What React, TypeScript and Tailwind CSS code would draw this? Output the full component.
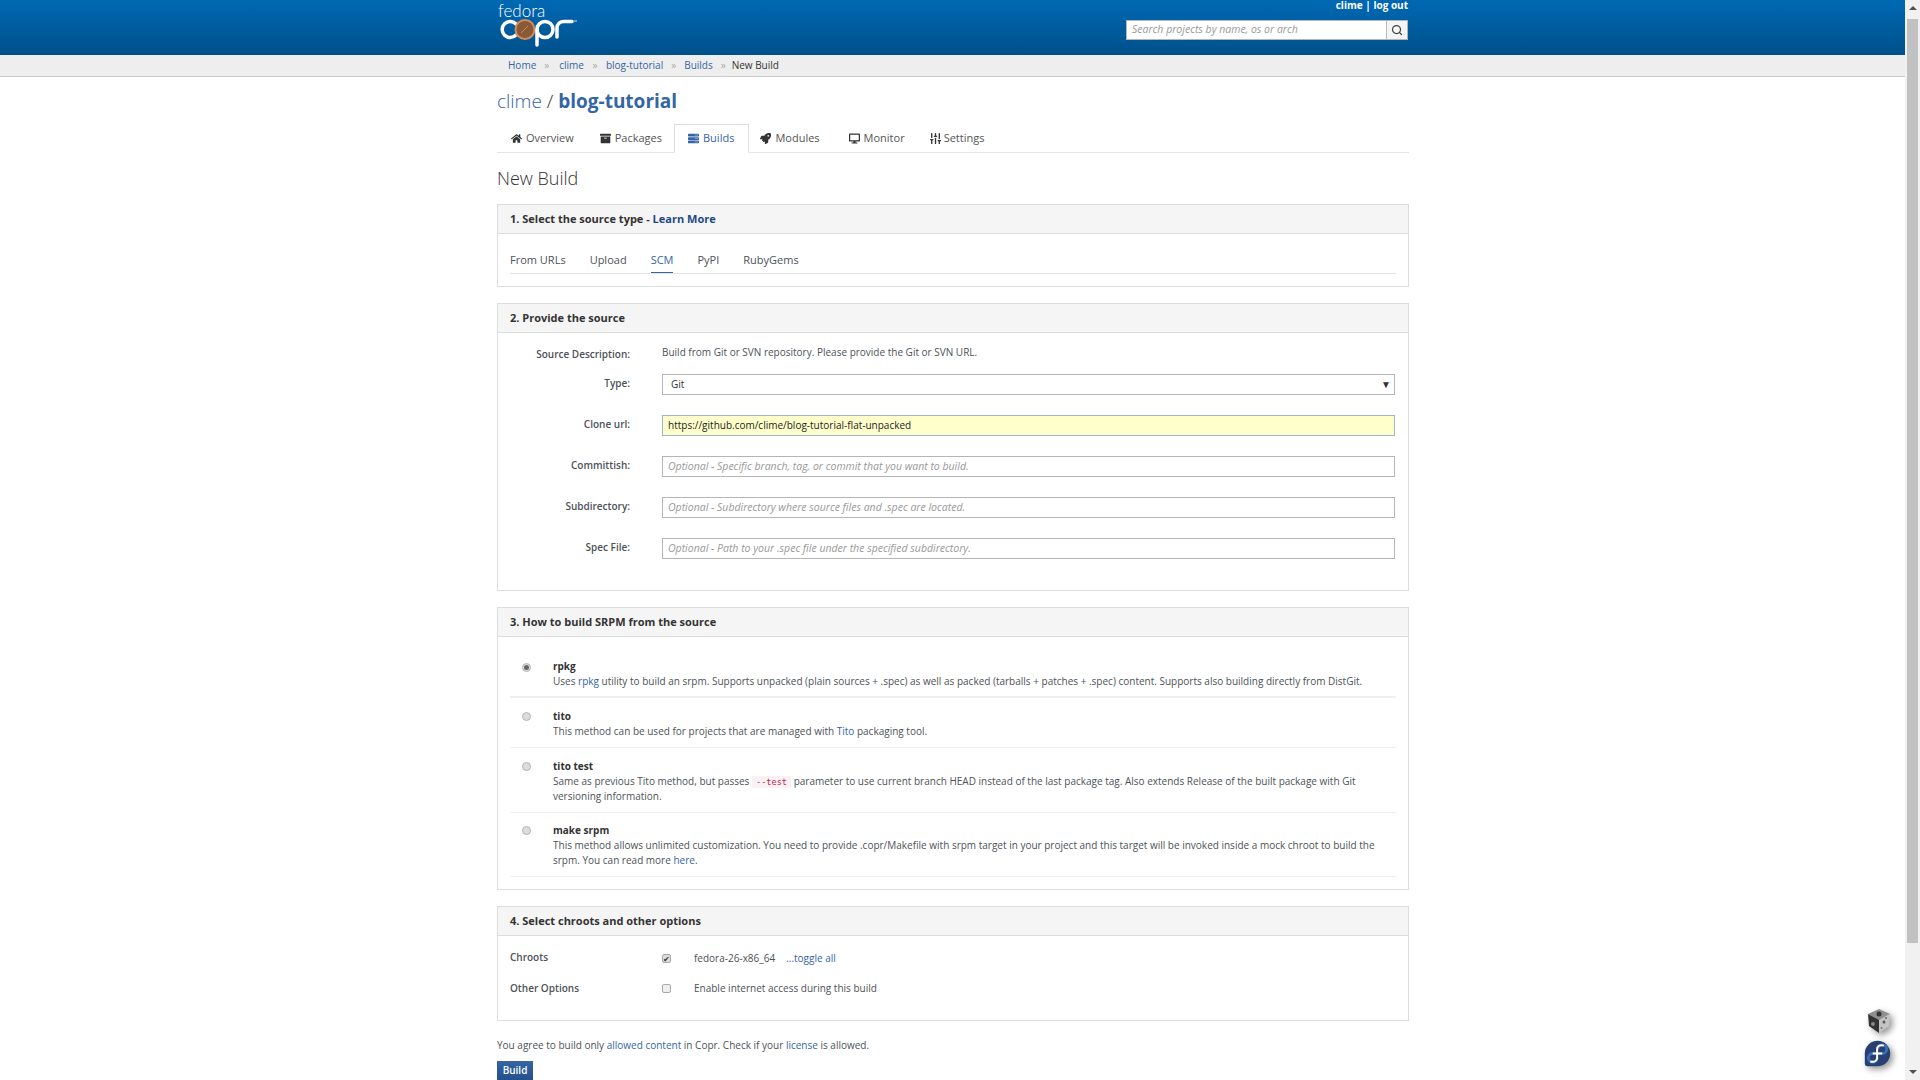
import { FaHome, FaArchive, FaServer, FaRocket, FaDesktop } from "react-icons/fa";
import { Search, SlidersVertical } from "lucide-react";
import type { ReactNode } from "react";

const tabs = [
  { icon: FaHome, label: "Overview", pad: "pl-[12px] pr-[11px]" },
  { icon: FaArchive, label: "Packages", pad: "pl-[12px] pr-[11px]" },
  { icon: FaServer, label: "Builds", pad: "pl-[12px] pr-[14px]", active: true },
  { icon: FaRocket, label: "Modules", pad: "pl-[9px] pr-[14px]" },
  { icon: FaDesktop, label: "Monitor", pad: "pl-[12px] pr-[11px]" },
];

const crumbs = [
  { label: "Home", sep: "ml-[8px] mr-[10px]" },
  { label: "clime", sep: "mx-[8.500px]" },
  { label: "blog-tutorial", sep: "mx-[8px]" },
  { label: "Builds", sep: "ml-[8px] mr-[6px]" },
];
const sourceTabs = ["From URLs", "Upload", "SCM", "PyPI", "RubyGems"];

const fields = [
  { label: "Committish:", placeholder: "Optional - Specific branch, tag, or commit that you want to build." },
  { label: "Subdirectory:", placeholder: "Optional - Subdirectory where source files and .spec are located." },
  { label: "Spec File:", placeholder: "Optional - Path to your .spec file under the specified subdirectory." },
];

function A({ children }: { children: ReactNode }) {
  return <a className="text-[#3465a4]">{children}</a>;
}

function Panel({ title, className, children }: { title: ReactNode; className: string; children: ReactNode }) {
  return (
    <section className={`border border-[#ddd] flex flex-col ${className}`}>
      <h3 className="h-[29px] shrink-0 bg-[#f5f5f5] border-b border-[#ddd] px-3 flex items-center text-[11px] font-bold text-[#333]">
        <span>{title}</span>
      </h3>
      {children}
    </section>
  );
}

function Radio({ checked }: { checked?: boolean }) {
  return (
    <span className="w-[9px] h-[9px] rounded-full border border-[#b5b5b5] bg-[#dcdcdc] flex items-center justify-center shrink-0">
      {checked && <span className="w-[5px] h-[5px] rounded-full bg-[#666]" />}
    </span>
  );
}

function Method({ name, checked, className, children }: { name: string; checked?: boolean; className: string; children: ReactNode }) {
  return (
    <div className={`flex ${className}`}>
      <div className={`w-[43px] pl-[12px] shrink-0 ${checked ? "pt-[4px]" : "pt-[3px]"}`}>
        <Radio checked={checked} />
      </div>
      <div className="leading-[15px]">
        <div className="font-bold text-[#333]">{name}</div>
        <div className="text-[#4d5258]">{children}</div>
      </div>
    </div>
  );
}

function CoprLogo() {
  return (
    <svg width="90" height="54" viewBox="0 0 90 54" fill="none">
      <text x="8" y="17" fill="#fff" fontSize="17" fontWeight="300" fontFamily="Lato, sans-serif">fedora</text>
      <path d="M26 24a8 8 0 1 0 0 11" stroke="#fff" strokeWidth="3.500" strokeLinecap="round" />
      <circle cx="35" cy="29.500" r="9.500" fill="#8a5a35" stroke="#d08c5e" strokeWidth="2" />
      <path d="M31 33l7-7" stroke="#b98a66" strokeWidth="1" />
      <circle cx="55" cy="29.500" r="8" stroke="#fff" strokeWidth="3.500" />
      <path d="M47 30v15" stroke="#fff" strokeWidth="3.500" strokeLinecap="round" />
      <path d="M67 37V28c0-4 3-6.500 7-6.500h8" stroke="#fff" strokeWidth="3.500" strokeLinecap="round" />
      <path d="M84 21h3" stroke="#cfe0ee" strokeWidth="1" />
    </svg>
  );
}

function FedoraLogo() {
  return (
    <svg width="27" height="27" viewBox="0 0 34 34">
      <path d="M17 1a16 16 0 0 1 0 32H4a3 3 0 0 1-3-3V17A16 16 0 0 1 17 1z" fill="#294172" />
      <path d="M17 17h-6a5.500 5.500 0 1 0 5.500 5.500" stroke="#3c6eb4" strokeWidth="3.500" fill="none" />
      <path d="M17 17h6a5.500 5.500 0 1 0-5.500-5.500" stroke="#3c6eb4" strokeWidth="3.500" fill="none" />
      <path d="M16.500 24v-12.500c0-3 2.500-5 5.500-5a8 8 0 0 1 3 .6M11 17h12M16.500 22c0 3-2.500 5.500-5.500 5.500a8 8 0 0 1-3-.6" stroke="#fff" strokeWidth="2.500" fill="none" />
    </svg>
  );
}

function CubeLogo() {
  return (
    <svg width="26" height="26" viewBox="0 0 26 26">
      <path d="M13 1l11 5-11 6L2 6z" fill="#8f8f8f" />
      <path d="M2 6l11 6 0 13L3 18z" fill="#333" />
      <path d="M24 6l-11 6 0 13 10-7z" fill="#c4c4c4" />
      <circle cx="18" cy="14" r="1.500" fill="#555" />
      <circle cx="20" cy="10" r="1" fill="#666" />
      <circle cx="15.500" cy="20" r="1" fill="#777" />
      <circle cx="7" cy="16" r="2" fill="#888" />
      <circle cx="13" cy="6" r="2.500" fill="#333" />
    </svg>
  );
}

export default function App() {
  return (
    <div className="h-screen overflow-hidden flex bg-white text-[10px] text-[#4d5258] font-['Open_Sans','Noto_Sans',sans-serif] relative">
      <main className="w-[1905px] shrink-0 flex flex-col">
        <header className="h-[55px] shrink-0 bg-gradient-to-b from-[#0069b4] to-[#00508a]">
          <div className="w-[919px] ml-[490px] h-full flex justify-between">
            <CoprLogo />
            <div className="w-[284px] flex flex-col items-end">
              <div className="h-[11px] leading-[11px] font-bold text-white pr-[1px]">clime | log out</div>
              <div className="mt-[9px] mr-[1px] flex w-[282px] h-[20px] border border-[#b5b5b5] bg-white">
                <div className="flex-1 pl-[5px] flex items-center italic text-[10.500px] text-[#999]">Search projects by name, os or arch</div>
                <div className="w-[21px] bg-[#f5f5f5] border-l border-[#bbb] flex items-center justify-center text-[#444]">
                  <Search size={12} strokeWidth={2.500} />
                </div>
              </div>
            </div>
          </div>
        </header>

        <nav className="h-[22px] shrink-0 bg-[#eee] border-b border-[#ccc]">
          <div className="ml-[508px] h-full flex items-center">
            {crumbs.map((c) => (
              <span key={c.label} className="flex items-center">
                <A>{c.label}</A>
                <span className={`${c.sep} text-[#aaa]`}>»</span>
              </span>
            ))}
            <span className="text-[#333]">New Build</span>
          </div>
        </nav>

        <div className="w-[912px] ml-[497px]">
          <h1 className="h-[47px] pt-[9px] text-[19px] leading-[30px] text-[#3465a4]">
            <span className="font-light">clime</span> <span className="text-[#333] font-light">/</span> <strong className="font-bold">blog-tutorial</strong>
          </h1>

          <div className="h-[29px] flex border-b border-[#e5e5e5] text-[11px]">
            {tabs.map((t) => (
              <div
                key={t.label}
                className={`h-[29px] ${t.pad} flex items-center gap-[3px] border ${t.active ? "border-[#ddd] border-b-white text-[#3465a4]" : "border-transparent text-[#555]"}`}
              >
                <span className="w-[13px] flex justify-center">
                  <t.icon className={`text-[11px] ${t.active ? "text-[#3465a4]" : "text-[#333]"}`} />
                </span>
                <span>{t.label}</span>
              </div>
            ))}
            <div className="h-[29px] px-[12px] flex items-center gap-[2px] text-[#555]">
              <SlidersVertical size={13} className="text-[#333]" strokeWidth={2.500} />
              <span>Settings</span>
            </div>
          </div>

          <h2 className="h-[51px] pt-[13px] text-[18px] leading-[25px] font-light text-[#333]">New Build</h2>

          <Panel className="h-[83px]" title={<>1. Select the source type - <a className="text-[#204a87]">Learn More</a></>}>
            <div className="mx-3 mt-[16px] h-[24px] flex gap-[24px] border-b border-[#e5e5e5] text-[11px] text-[#4d5258]">
              {sourceTabs.map((s) => (
                <span key={s} className={`h-[23px] pt-[2px] ${s === "SCM" ? "text-[#3465a4] border-b border-[#3465a4]" : ""}`}>{s}</span>
              ))}
            </div>
          </Panel>

          <Panel className="mt-[16px] h-[288px]" title="2. Provide the source">
            <div className="pt-[11px]">
              <div className="flex h-[30px]">
                <div className="w-[132px] pt-[3px] text-right font-semibold">Source Description:</div>
                <div className="ml-[32px] pt-[1px]">Build from Git or SVN repository. Please provide the Git or SVN URL.</div>
              </div>
              <div className="flex h-[41px]">
                <div className="w-[132px] pt-[2px] text-right font-semibold">Type:</div>
                <div className="ml-[32px] w-[733px] h-[21px] border border-[#b5b5b5] px-[8px] flex items-center justify-between text-[#333]">
                  <span>Git</span>
                  <span className="text-[10px] -mr-[5px]">▼</span>
                </div>
              </div>
              <div className="flex h-[41px]">
                <div className="w-[132px] pt-[2px] text-right font-semibold">Clone url:</div>
                <div className="ml-[32px] w-[733px] h-[21px] border border-[#a0b4c8] bg-[#ffffcc] px-[5px] flex items-center text-[#222]">
                  https://github.com/clime/blog-tutorial-flat-unpacked
                </div>
              </div>
              {fields.map((f) => (
                <div key={f.label} className="flex h-[41px]">
                  <div className="w-[132px] pt-[2px] text-right font-semibold">{f.label}</div>
                  <div className="ml-[32px] w-[733px] h-[21px] border border-[#b5b5b5] px-[5px] flex items-center italic text-[10.500px] text-[#999]">
                    {f.placeholder}
                  </div>
                </div>
              ))}
            </div>
          </Panel>

          <Panel className="mt-[16px] h-[283px]" title="3. How to build SRPM from the source">
            <div className="mx-3 pt-[22px]">
              <Method name="rpkg" checked className="h-[39px] border-b-2 border-[#f0f0f0]">
                Uses <A>rpkg</A> utility to build an srpm. Supports unpacked (plain sources + .spec) as well as packed (tarballs + patches + .spec) content. Supports also building directly from DistGit.
              </Method>
              <Method name="tito" className="h-[50px] pt-[11px] border-b border-[#f0f0f0]">
                This method can be used for projects that are managed with <A>Tito</A> packaging tool.
              </Method>
              <Method name="tito test" className="h-[65px] pt-[11px] border-b border-[#f0f0f0]">
                Same as previous Tito method, but passes <code className="font-['DejaVu_Sans_Mono',monospace] text-[8.600px] leading-[10px] text-[#c7254e] bg-[#f9f2f4] px-[4px] py-[1px]">--test</code> parameter to use current branch HEAD instead of the last package tag. Also extends Release of the built package with Git versioning information.
              </Method>
              <Method name="make srpm" className="h-[64px] pt-[10px] border-b border-[#f0f0f0]">
                This method allows unlimited customization. You need to provide .copr/Makefile with srpm target in your project and this target will be invoked inside a mock chroot to build the srpm. You can read more <A>here</A>.
              </Method>
            </div>
          </Panel>

          <Panel className="mt-[16px] h-[115px]" title="4. Select chroots and other options">
            <div className="px-3 pt-[14px]">
              <div className="flex h-[31px]">
                <div className="w-[152px] font-semibold">Chroots</div>
                <div className="pt-[1px] flex">
                  <span className="w-[9px] h-[9px] mt-[3px] mr-[23px] rounded-[2px] border border-[#aaa] bg-[#ddd] text-[8px] leading-[8px] text-center text-[#333]">✔</span>
                  <span>fedora-26-x86_64</span>
                  <span className="ml-[11px]"><A>...toggle all</A></span>
                </div>
              </div>
              <div className="flex">
                <div className="w-[152px] font-semibold">Other Options</div>
                <span className="w-[9px] h-[9px] mt-[3px] mr-[23px] rounded-[2px] border border-[#aaa] bg-[#eee]" />
                <span>Enable internet access during this build</span>
              </div>
            </div>
          </Panel>

          <p className="mt-[16px] h-[16px] leading-[16px]">
            You agree to build only <A>allowed content</A> in Copr. Check if your <A>license</A> is allowed.
          </p>
          <button className="mt-[8px] w-[36px] h-[24px] pb-[6px] bg-gradient-to-b from-[#3465a4] to-[#204a87] text-white text-[10px] font-semibold">Build</button>
        </div>
      </main>

      <aside className="w-[15px] shrink-0 bg-[#f1f1f1] flex flex-col items-center relative">
        <span className="mt-[6px] w-0 h-0 border-x-[4px] border-x-transparent border-b-[4px] border-b-[#505050]" />
        <div className="mt-[9px] w-[11px] h-[924px] bg-[#c1c1c1]" />
        <span className="absolute bottom-[6px] w-0 h-0 border-x-[4px] border-x-transparent border-t-[4px] border-t-[#505050]" />
      </aside>

      <div className="absolute left-[1866px] top-[1008px] drop-shadow-[3px_3px_3px_rgba(0,0,0,0.4)]">
        <CubeLogo />
      </div>
      <div className="absolute left-[1864px] top-[1040px] drop-shadow-[3px_3px_3px_rgba(0,0,0,0.4)]">
        <FedoraLogo />
      </div>
    </div>
  );
}
